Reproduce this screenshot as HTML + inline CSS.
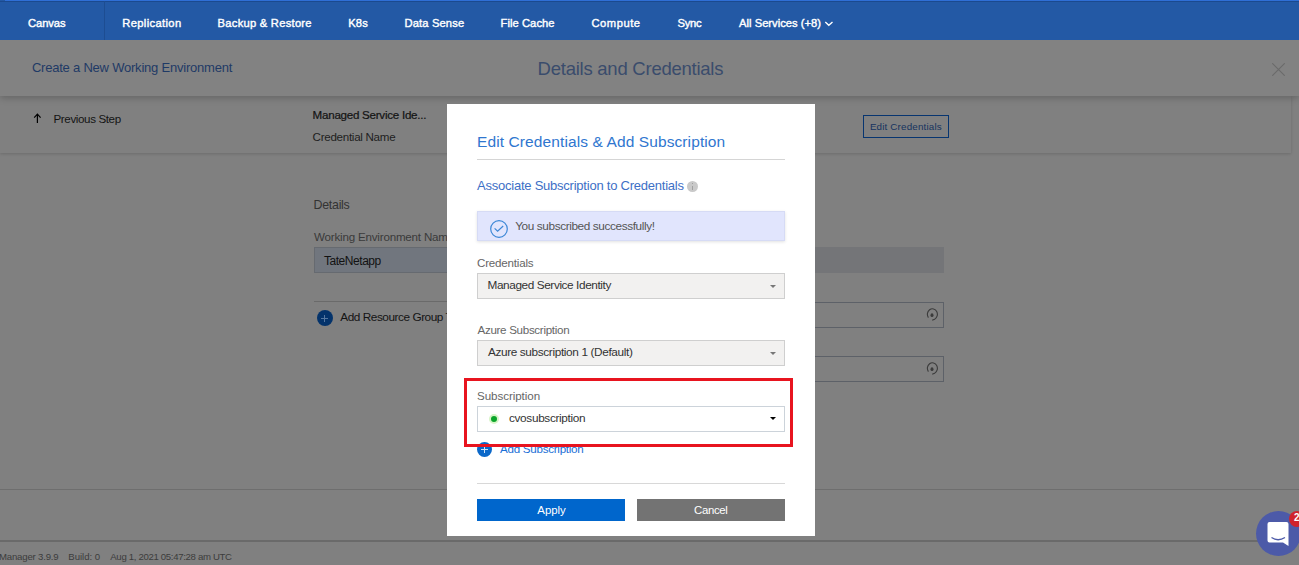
<!DOCTYPE html>
<html><head><meta charset="utf-8"><style>
*{margin:0;padding:0;box-sizing:border-box}
html,body{width:1299px;height:565px;overflow:hidden;background:#808080;font-family:"Liberation Sans",sans-serif}
.a{position:absolute}
.t{position:absolute;white-space:nowrap;line-height:1em}
</style></head><body>
<!-- page (dimmed) -->
<div class="a" style="left:0;top:96px;width:1291px;height:57px;background:#808080;box-shadow:0 1px 3px rgba(0,0,0,0.16)"></div>
<div class="a" style="left:0;top:40px;width:1299px;height:56px;background:#828282;box-shadow:0 2px 7px rgba(0,0,0,0.22)"></div>
<div class="t" id="h1" style="left:31.90px;top:61.00px;font-size:13px;color:#1f3a66;font-weight:normal;letter-spacing:-0.216px">Create a New Working Environment</div>
<div class="t" id="h2" style="left:537.60px;top:60.04px;font-size:18.5px;color:#3a4c6c;font-weight:normal;letter-spacing:-0.245px">Details and Credentials</div>
<div class="t" id="s1" style="left:53.50px;top:113.18px;font-size:11.6px;color:#141414;font-weight:normal;letter-spacing:-0.383px">Previous Step</div>
<div class="t" id="s2" style="left:312.60px;top:109.18px;font-size:11.6px;color:#141414;font-weight:normal;-webkit-text-stroke-width:0.22px;letter-spacing:-0.257px">Managed Service Ide...</div>
<div class="t" id="s3" style="left:312.60px;top:131.18px;font-size:11.6px;color:#1e1e1e;font-weight:normal;letter-spacing:-0.286px">Credential Name</div>
<svg class="a" style="left:1272px;top:63px" width="13" height="13" viewBox="0 0 13 13"><path d="M0.3 0.3L12.7 12.7M12.7 0.3L0.3 12.7" stroke="#6a6a6a" stroke-width="1.1" fill="none"/></svg>
<svg class="a" style="left:33px;top:113px" width="9" height="10" viewBox="0 0 9 10"><path d="M4.4 10V1.2M1.2 4.6L4.4 1.2L7.6 4.6" stroke="#000" stroke-width="1.2" fill="none"/></svg>
<div class="a" style="left:863px;top:115px;width:86px;height:23px;border:1.5px solid #073570"></div>
<div class="t" id="s4" style="left:869.90px;top:121.70px;font-size:9.8px;color:#15335f;font-weight:normal;letter-spacing:0.173px">Edit Credentials</div>
<div class="t" id="p1" style="left:313.60px;top:198.50px;font-size:12.4px;color:#333;font-weight:normal;letter-spacing:-0.283px">Details</div>
<div class="t" id="p2" style="left:314.00px;top:231.18px;font-size:11.6px;color:#3a3a3a;font-weight:normal;letter-spacing:-0.196px">Working Environment Name</div>
<div class="a" style="left:314px;top:247px;width:300px;height:26px;background:#71767e;border:1px solid #666a70"></div>
<div class="a" style="left:640px;top:247px;width:304px;height:26px;background:#747578"></div>
<div class="t" id="p3" style="left:323.90px;top:254.84px;font-size:12px;color:#121212;font-weight:normal;letter-spacing:-0.444px">TateNetapp</div>
<div class="a" style="left:314px;top:301px;width:140px;height:1px;background:#6a6a6a"></div>
<div class="a" style="left:316.5px;top:310px;width:16px;height:16px;border-radius:50%;background:#04336b"></div>
<div class="a" style="left:321px;top:317.5px;width:7px;height:1.2px;background:#5577a0"></div>
<div class="a" style="left:323.9px;top:314.5px;width:1.2px;height:7px;background:#5577a0"></div>
<div class="t" id="p4" style="left:340.30px;top:312.01px;font-size:11.8px;color:#141414;font-weight:normal;letter-spacing:-0.455px">Add Resource Group Tags</div>
<div class="a" style="left:600px;top:302px;width:344px;height:26px;border:1px solid #5d6168"></div>
<div class="a" style="left:600px;top:356px;width:344px;height:26px;border:1px solid #5d6168"></div>
<svg class="a" style="left:926px;top:308px" width="12" height="13" viewBox="0 0 12 13"><path d="M2.4 9.6A5 5.5 0 1 1 8.6 11.2L6.2 12.2" stroke="#3b3b3b" stroke-width="1.1" fill="none"/><ellipse cx="6" cy="7.2" rx="1.5" ry="1.9" fill="#3b3b3b"/></svg>
<svg class="a" style="left:926px;top:362px" width="12" height="13" viewBox="0 0 12 13"><path d="M2.4 9.6A5 5.5 0 1 1 8.6 11.2L6.2 12.2" stroke="#3b3b3b" stroke-width="1.1" fill="none"/><ellipse cx="6" cy="7.2" rx="1.5" ry="1.9" fill="#3b3b3b"/></svg>
<div class="a" style="left:0;top:489px;width:1299px;height:1px;background:#6e6e6e"></div>
<div class="a" style="left:0;top:540px;width:1299px;height:2px;background:#6a6a6a"></div>
<div class="t" id="f1" style="left:-1.00px;top:551.87px;font-size:9.6px;color:#3c3c3c;font-weight:normal;letter-spacing:-0.183px">Manager 3.9.9</div>
<div class="t" id="f2" style="left:68.30px;top:551.87px;font-size:9.6px;color:#3c3c3c;font-weight:normal;letter-spacing:-0.014px">Build: 0</div>
<div class="t" id="f3" style="left:110.30px;top:551.87px;font-size:9.6px;color:#3c3c3c;font-weight:normal;letter-spacing:-0.323px">Aug 1, 2021 05:47:28 am UTC</div>
<!-- nav -->
<div class="a" style="left:0;top:0;width:1299px;height:40px;background:#2359a5"></div>
<div class="a" style="left:5px;top:0;width:1294px;height:1px;background:#2f6fd6"></div>
<div class="a" style="left:0;top:1px;width:1299px;height:1px;background:#1b4a8f"></div>
<div class="a" style="left:104px;top:1px;width:1px;height:39px;background:#1d4d92"></div>
<div class="t" id="n1" style="left:28.00px;top:17.52px;font-size:11.2px;color:#fff;font-weight:normal;-webkit-text-stroke-width:0.4px;letter-spacing:-0.080px">Canvas</div>
<div class="t" id="n2" style="left:122.30px;top:17.52px;font-size:11.2px;color:#fff;font-weight:normal;-webkit-text-stroke-width:0.4px;letter-spacing:0.350px">Replication</div>
<div class="t" id="n3" style="left:217.60px;top:17.52px;font-size:11.2px;color:#fff;font-weight:normal;-webkit-text-stroke-width:0.4px;letter-spacing:0.253px">Backup &amp; Restore</div>
<div class="t" id="n4" style="left:348.20px;top:17.52px;font-size:11.2px;color:#fff;font-weight:normal;-webkit-text-stroke-width:0.4px;letter-spacing:0.150px">K8s</div>
<div class="t" id="n5" style="left:404.50px;top:17.52px;font-size:11.2px;color:#fff;font-weight:normal;-webkit-text-stroke-width:0.4px;letter-spacing:0.133px">Data Sense</div>
<div class="t" id="n6" style="left:500.50px;top:17.52px;font-size:11.2px;color:#fff;font-weight:normal;-webkit-text-stroke-width:0.4px;letter-spacing:0.067px">File Cache</div>
<div class="t" id="n7" style="left:591.50px;top:17.52px;font-size:11.2px;color:#fff;font-weight:normal;-webkit-text-stroke-width:0.4px;letter-spacing:0.533px">Compute</div>
<div class="t" id="n8" style="left:677.50px;top:17.52px;font-size:11.2px;color:#fff;font-weight:normal;-webkit-text-stroke-width:0.4px;letter-spacing:-0.267px">Sync</div>
<div class="t" id="n9" style="left:739.10px;top:17.52px;font-size:11.2px;color:#fff;font-weight:normal;-webkit-text-stroke-width:0.4px;letter-spacing:0.006px">All Services (+8)</div>
<svg class="a" style="left:824px;top:20px" width="10" height="7" viewBox="0 0 10 7"><path d="M1.3 2L4.8 5.2L8.5 2" stroke="#fff" stroke-width="1.4" fill="none"/></svg>
<!-- modal -->
<div class="a" style="left:447px;top:104px;width:368px;height:432px;background:#fff"></div>
<div class="t" id="m1" style="left:477.00px;top:133.88px;font-size:15.5px;color:#2f76cf;font-weight:normal;letter-spacing:0.103px">Edit Credentials &amp; Add Subscription</div>
<div class="a" style="left:477px;top:159px;width:308px;height:1px;background:#d5d5d5"></div>
<div class="t" id="m2" style="left:477.00px;top:179.00px;font-size:13px;color:#3d6fc6;font-weight:normal;letter-spacing:-0.233px">Associate Subscription to Credentials</div>
<div class="a" style="left:687px;top:181px;width:11px;height:11px;border-radius:50%;background:#c9c9c9"></div>
<div class="a" style="left:692px;top:183px;width:1.4px;height:1.3px;background:#a0a0a0"></div>
<div class="a" style="left:692px;top:185.5px;width:1.4px;height:4.5px;background:#a0a0a0"></div>
<div class="a" style="left:477px;top:211px;width:308px;height:30px;background:#e1e5fd;border:1px solid #d6dbf5;box-shadow:0 1px 3px rgba(0,0,0,0.12)"></div>
<div class="a" style="left:490px;top:220px;width:18px;height:18px">
<svg width="18" height="18" viewBox="0 0 18 18"><circle cx="9" cy="9" r="8.3" stroke="#3c87d6" stroke-width="1.2" fill="none"/><path d="M4.6 8.4L7.6 11.2L13.2 6" stroke="#3c87d6" stroke-width="1.2" fill="none"/></svg></div>
<div class="t" id="m3" style="left:515.20px;top:221.01px;font-size:11.8px;color:#555;font-weight:normal;letter-spacing:-0.393px">You subscribed successfully!</div>
<div class="t" id="m4" style="left:477.00px;top:257.18px;font-size:11.6px;color:#666;font-weight:normal;letter-spacing:-0.200px">Credentials</div>
<div class="a" style="left:477px;top:273px;width:308px;height:26px;background:#f2f1f0;border:1px solid #cfcfcf"></div>
<div class="t" id="m5" style="left:487.50px;top:280.01px;font-size:11.8px;color:#333;font-weight:normal;letter-spacing:-0.404px">Managed Service Identity</div>
<svg class="a" style="left:770px;top:285px" width="6" height="3" viewBox="0 0 6 3"><path d="M0 0H6L3 3Z" fill="#777"/></svg>
<div class="t" id="m6" style="left:477.50px;top:324.18px;font-size:11.6px;color:#666;font-weight:normal;letter-spacing:-0.306px">Azure Subscription</div>
<div class="a" style="left:477px;top:340px;width:308px;height:26px;background:#f2f1f0;border:1px solid #cfcfcf"></div>
<div class="t" id="m7" style="left:487.90px;top:347.01px;font-size:11.8px;color:#333;font-weight:normal;letter-spacing:-0.359px">Azure subscription 1 (Default)</div>
<svg class="a" style="left:770px;top:352px" width="6" height="3" viewBox="0 0 6 3"><path d="M0 0H6L3 3Z" fill="#777"/></svg>
<div class="t" id="m8" style="left:477.00px;top:390.18px;font-size:11.6px;color:#666;font-weight:normal;letter-spacing:-0.064px">Subscription</div>
<div class="a" style="left:477px;top:406px;width:308px;height:26px;background:#fff;border:1px solid #ccd3da"></div>
<div class="a" style="left:489px;top:414px;width:10px;height:10px;border-radius:50%;background:#0aa52a;border:2px solid #d8f5c8"></div>
<div class="t" id="m9" style="left:509.00px;top:413.01px;font-size:11.8px;color:#333;font-weight:normal;letter-spacing:-0.336px">cvosubscription</div>
<svg class="a" style="left:770px;top:417px" width="6" height="3" viewBox="0 0 6 3"><path d="M0 0H6L3 3Z" fill="#000"/></svg>
<div class="a" style="left:477px;top:442px;width:15px;height:15px;border-radius:50%;background:#0b68c9"></div>
<div class="a" style="left:481px;top:449px;width:7px;height:1.2px;background:#cfe0f5"></div>
<div class="a" style="left:483.9px;top:446px;width:1.2px;height:7px;background:#cfe0f5"></div>
<div class="t" id="m10" style="left:500.00px;top:443.18px;font-size:11.6px;color:#1a6fd6;font-weight:normal;letter-spacing:-0.260px">Add Subscription</div>
<div class="a" style="left:464px;top:378px;width:329px;height:69px;border:3px solid #e8141f"></div>
<div class="a" style="left:477px;top:483px;width:308px;height:1px;background:#d8d8d8"></div>
<div class="a" style="left:477px;top:499px;width:148px;height:22px;background:#0066cc"></div>
<div class="a" style="left:637px;top:499px;width:148px;height:22px;background:#737373"></div>
<div class="t" id="b1" style="left:537.30px;top:505.35px;font-size:11.4px;color:#fff;font-weight:normal;letter-spacing:0.000px">Apply</div>
<div class="t" id="b2" style="left:694.00px;top:505.35px;font-size:11.4px;color:#fff;font-weight:normal;letter-spacing:-0.340px">Cancel</div>
<!-- chat -->
<div class="a" style="left:1256px;top:511px;width:45px;height:45px;border-radius:50%;background:#4c5aa8"></div>
<svg class="a" style="left:1267px;top:521px" width="24" height="26" viewBox="0 0 24 26"><path d="M2.5 1H19.5A2 2 0 0 1 21.5 3V25L16 21.5H2.5A2 2 0 0 1 0.5 19.5V3A2 2 0 0 1 2.5 1Z" fill="#fff"/><path d="M4.5 16.5Q11 21 18 16.5" stroke="#4c5aa8" stroke-width="1.3" fill="none"/></svg>
<div class="a" style="left:1288.5px;top:510.5px;width:16px;height:16px;border-radius:50%;background:#d0232b"></div>
<div class="a" style="left:1294px;top:512px;font:bold 10px/12px 'Liberation Sans',sans-serif;color:#fff">2</div>
</body></html>
